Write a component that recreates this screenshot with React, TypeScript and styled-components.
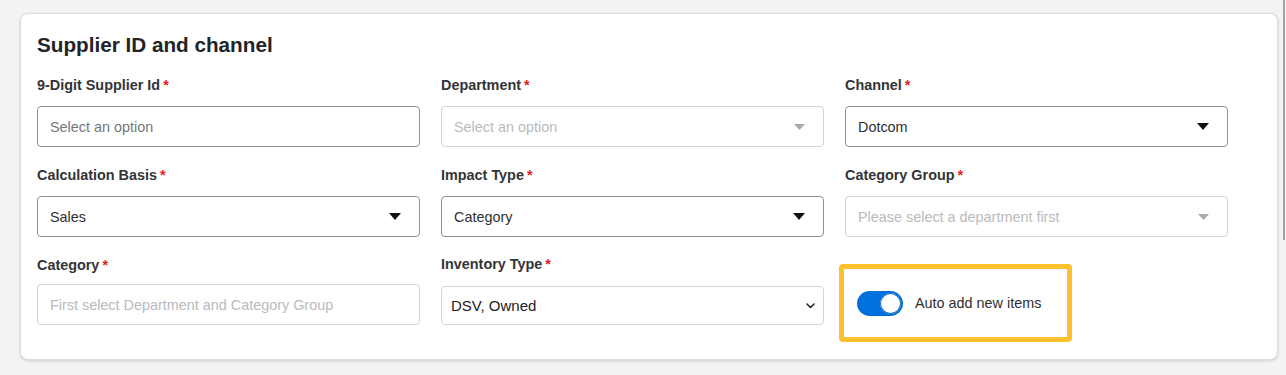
import React from "react";
import styled, { createGlobalStyle } from "styled-components";

const GlobalStyle = createGlobalStyle`
  html, body {
    margin: 0;
    padding: 0;
    background: #f3f3f3;
    font-family: "Liberation Sans", Arial, Helvetica, sans-serif;
  }
  * { box-sizing: border-box; }
`;

const Page = styled.div`
  padding: 13px 8px 16px 20px;
`;

const Card = styled.section`
  background: #ffffff;
  border: 1px solid #dddddd;
  border-radius: 8px;
  box-shadow: 0 1px 3px rgba(0, 0, 0, 0.16);
  padding: 19px 16px 17px 16px;
`;

const Title = styled.h2`
  margin: 0;
  font-size: 20.7px;
  line-height: 24px;
  font-weight: 700;
  color: #222326;
`;

const Grid = styled.div`
  display: grid;
  grid-template-columns: repeat(3, 383px);
  column-gap: 21px;
  row-gap: 20px;
  margin-top: 20px;
  align-items: start;
`;

const Field = styled.div<{ $gap?: number }>`
  display: flex;
  flex-direction: column;
  gap: ${(p) => p.$gap ?? 12}px;
`;

const Label = styled.label<{ $lift?: number }>`
  font-size: 14.4px;
  line-height: 17px;
  font-weight: 700;
  color: #333438;
  margin-top: ${(p) => -(p.$lift ?? 0)}px;
`;

const Star = styled.span`
  color: #e31b1b;
  margin-left: 3px;
`;

type Variant = "filled" | "placeholder" | "disabled";

const Box = styled.div<{ $variant: Variant }>`
  height: 41px;
  border: 1px solid
    ${(p) => (p.$variant === "disabled" ? "#d4d4d6" : "#909196")};
  border-radius: 4px;
  background: #ffffff;
  padding: 0 18px 0 12px;
  display: flex;
  align-items: center;
  justify-content: space-between;
  font-size: 14.4px;
  color: ${(p) =>
    p.$variant === "filled"
      ? "#2e2f32"
      : p.$variant === "placeholder"
      ? "#74767c"
      : "#b9babd"};
`;

const NativeBox = styled.div`
  height: 39px;
  border: 1px solid #d4d4d6;
  border-radius: 4px;
  background: #ffffff;
  padding: 0 8px 0 9px;
  display: flex;
  align-items: center;
  justify-content: space-between;
  font-size: 15px;
  color: #1f2023;
`;

const ToggleFrame = styled.div`
  margin-left: -6px;
  margin-top: 7px;
  width: 233px;
  height: 78px;
  border: 5px solid #fcc02c;
  border-radius: 4px;
  display: flex;
  align-items: center;
  gap: 12px;
  padding-left: 13px;
`;

const Track = styled.span<{ $on: boolean }>`
  position: relative;
  width: 46px;
  height: 25px;
  border-radius: 13px;
  background: ${(p) => (p.$on ? "#0071dc" : "#c7c8ca")};
  flex: none;
`;

const Knob = styled.span<{ $on: boolean }>`
  position: absolute;
  top: 2px;
  left: ${(p) => (p.$on ? 23 : 2)}px;
  width: 21px;
  height: 21px;
  border-radius: 50%;
  background: #ffffff;
  box-shadow: 0 0 0 1px #0a62c0 inset;
`;

const ToggleText = styled.span`
  font-size: 14.4px;
  color: #2e2f32;
`;

const ScrollThumb = styled.div`
  position: fixed;
  top: 0;
  right: 1px;
  width: 2px;
  height: 240px;
  background: #a2a2a2;
`;

const Caret = ({ muted }: { muted?: boolean }) =>
  muted ? (
    <svg width="11" height="6" viewBox="0 0 11 6" aria-hidden>
      <path d="M0 0 H11 L5.5 6 Z" fill="#a9aaad" />
    </svg>
  ) : (
    <svg width="12" height="7" viewBox="0 0 12 7" aria-hidden>
      <path d="M0 0 H12 L6 7 Z" fill="#111" />
    </svg>
  );

const Chevron = () => (
  <svg width="9" height="6" viewBox="0 0 9 6" aria-hidden>
    <path
      d="M1 1 L4.5 4.5 L8 1"
      fill="none"
      stroke="#222"
      strokeWidth="1.5"
      strokeLinecap="round"
      strokeLinejoin="round"
    />
  </svg>
);

type SelectFieldProps = {
  label: string;
  text: string;
  variant: Variant;
  caret?: boolean;
  gap?: number;
};

const SelectField = ({ label, text, variant, caret = true, gap }: SelectFieldProps) => (
  <Field $gap={gap}>
    <Label>
      {label}
      <Star>*</Star>
    </Label>
    <Box $variant={variant}>
      <span>{text}</span>
      {caret && <Caret muted={variant === "disabled"} />}
    </Box>
  </Field>
);

export default function App() {
  return (
    <>
      <GlobalStyle />
      <Page>
        <Card>
          <Title>Supplier ID and channel</Title>
          <Grid>
            <SelectField
              label="9-Digit Supplier Id"
              text="Select an option"
              variant="placeholder"
              caret={false}
            />
            <SelectField label="Department" text="Select an option" variant="disabled" />
            <SelectField label="Channel" text="Dotcom" variant="filled" />

            <SelectField label="Calculation Basis" text="Sales" variant="filled" />
            <SelectField label="Impact Type" text="Category" variant="filled" />
            <SelectField
              label="Category Group"
              text="Please select a department first"
              variant="disabled"
            />

            <SelectField
              label="Category"
              text="First select Department and Category Group"
              variant="disabled"
              caret={false}
              gap={10}
            />
            <Field $gap={13}>
              <Label $lift={1}>
                Inventory Type
                <Star>*</Star>
              </Label>
              <NativeBox>
                <span>DSV, Owned</span>
                <Chevron />
              </NativeBox>
            </Field>
            <ToggleFrame>
              <Track $on>
                <Knob $on />
              </Track>
              <ToggleText>Auto add new items</ToggleText>
            </ToggleFrame>
          </Grid>
        </Card>
      </Page>
      <ScrollThumb />
    </>
  );
}
